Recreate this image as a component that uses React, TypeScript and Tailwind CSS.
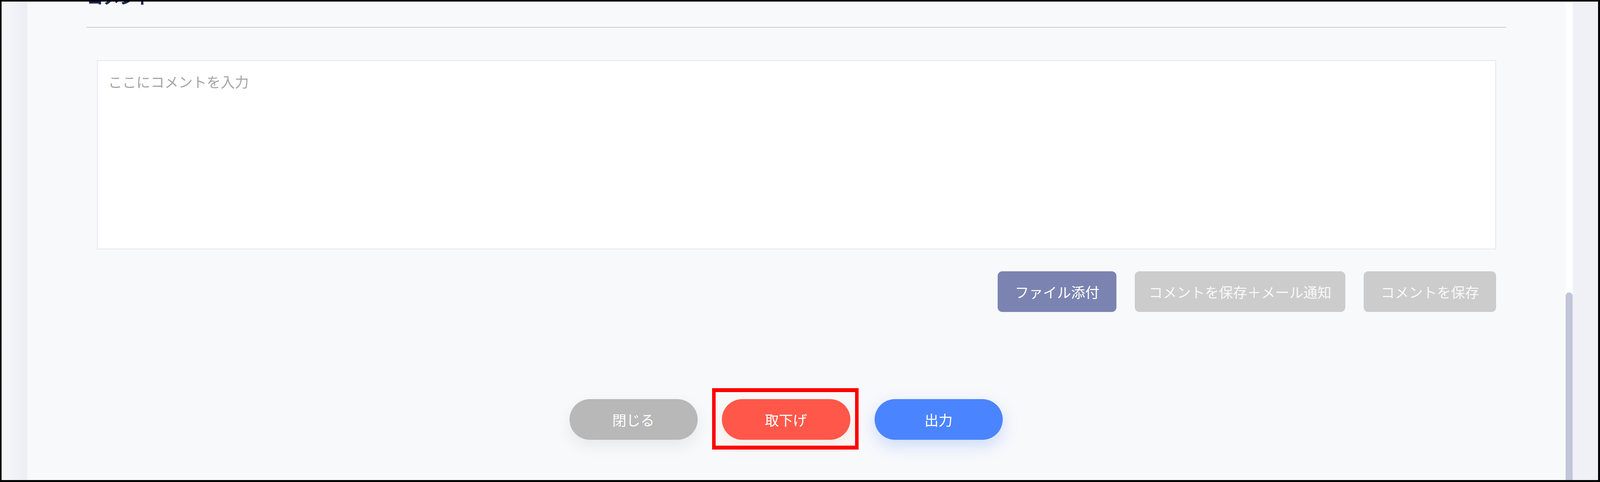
import { useState } from 'react';

const font = { fontFamily: '"Noto Sans CJK JP", "Noto Sans", sans-serif' };

export default function App() {
  const [comment, setComment] = useState('');

  return (
    <div
      className="w-full h-[1233px] overflow-hidden flex border-black border-t-[4px] border-l-[4px] border-r-[5px] border-b-[5px] bg-white"
      style={font}
    >
      {/* 左の余白 */}
      <div className="w-[66px] shrink-0 bg-linear-to-r from-[#f6f7fa] to-[#eceef4]" />

      {/* メインパネル */}
      <div className="flex-1 min-w-0 flex flex-col bg-[#f8f9fb] px-[152px]">
        <h2 className="-mt-[34px] h-[43px] leading-[43px] text-[42px] font-bold text-[#1b2554]">
          コメント
        </h2>
        <div className="mt-[56px] h-[2px] bg-[#c9ccd1]" />

        <textarea
          value={comment}
          onChange={(e) => setComment(e.target.value)}
          placeholder="ここにコメントを入力"
          className="mt-[83px] mx-[26px] h-[484px] min-w-0 resize-none border-2 border-[#e4e6ea] bg-white px-[27px] py-[24px] text-[36px] leading-[56px] text-[#333] placeholder:text-[#a6a6a6] outline-none"
        />

        <div className="mt-[56px] mr-[26px] flex justify-end gap-[47px]">
          <button className="w-[304px] h-[104px] rounded-[12px] bg-[#7b84b1] text-[36px] text-white flex items-center justify-center">
            ファイル添付
          </button>
          <button className="w-[539px] h-[104px] rounded-[12px] bg-[#cccccc] text-[36px] text-[#f8f8f8] flex items-center justify-center">
            コメントを保存＋メール通知
          </button>
          <button className="w-[339px] h-[104px] rounded-[12px] bg-[#cccccc] text-[36px] text-[#f8f8f8] flex items-center justify-center">
            コメントを保存
          </button>
        </div>

        <div className="mt-[223px] pr-[54px] flex justify-center gap-[62px]">
          <button className="w-[328px] h-[104px] rounded-full bg-[#b8b8b8] text-[36px] text-white flex items-center justify-center shadow-[0_16px_40px_rgba(0,0,0,0.07)]">
            閉じる
          </button>
          <div className="relative">
            <button className="w-[329px] h-[104px] rounded-full bg-[#ff584a] text-[36px] text-white flex items-center justify-center shadow-[0_16px_40px_rgba(255,150,80,0.14)]">
              取下げ
            </button>
            <span className="absolute -left-[25px] -right-[21px] -top-[28px] -bottom-[25px] border-x-[9px] border-y-[10px] border-[#ff0000] pointer-events-none" />
          </div>
          <button className="w-[328px] h-[104px] rounded-full bg-[#4b84ff] text-[36px] text-white flex items-center justify-center shadow-[0_16px_40px_rgba(75,132,255,0.25)]">
            出力
          </button>
        </div>
      </div>

      {/* スクロールバー */}
      <div className="w-[18px] shrink-0 bg-white flex flex-col">
        <div className="mt-[744px] flex-1 rounded-t-full bg-[#c1c5d6]" />
      </div>

      {/* 右の余白 */}
      <div className="w-[65px] shrink-0 bg-[#f0f1f7]" />
    </div>
  );
}
